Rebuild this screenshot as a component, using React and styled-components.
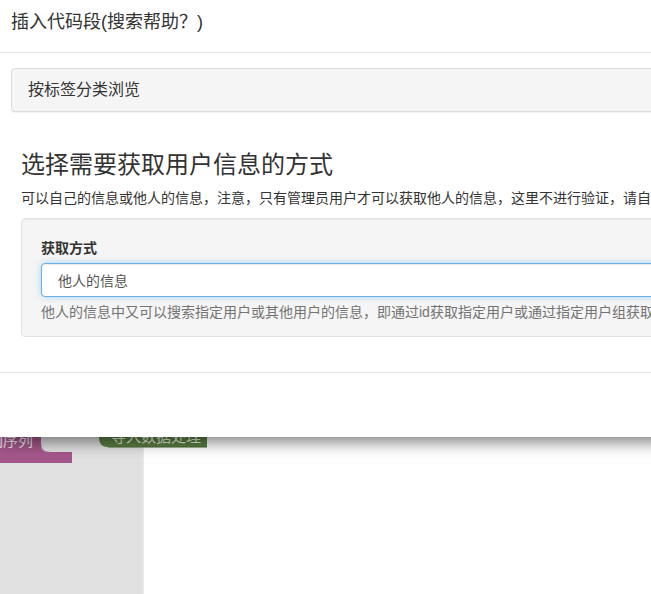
import styled, { createGlobalStyle } from 'styled-components';

const GlobalStyle = createGlobalStyle`
  html, body {
    margin: 0;
    padding: 0;
    overflow: hidden;
  }
  body {
    font-family: "Liberation Sans", "Noto Sans CJK SC", sans-serif;
    font-size: 14px;
    color: #333;
  }
`;

const Page = styled.div`
  position: relative;
  width: 651px;
  height: 594px;
  overflow: hidden;
  display: flex;
  background: #fff;
`;

const Toolbox = styled.div`
  width: 143px;
  flex-shrink: 0;
  background: #e1e1e1;
  border-right: 1px solid #ececec;
`;

const Workspace = styled.div`
  flex: 1;
  background: #fff;
`;

const Block = styled.svg`
  position: absolute;
  overflow: visible;
`;

const BlockText = styled.text`
  font-family: "Liberation Sans", "Noto Sans CJK SC", sans-serif;
  font-size: 15px;
  fill: ${({ $light }) => $light || '#f0e6ee'};
`;

const Modal = styled.div`
  position: absolute;
  top: 0;
  left: 0;
  width: 920px;
  background: #fff;
  box-shadow: 0 5px 15px rgba(0, 0, 0, 0.5);
  z-index: 2;
`;

const Header = styled.div`
  padding: 9px 11px 17px;
  border-bottom: 1px solid #e5e5e5;
`;

const Title = styled.h4`
  margin: 0;
  font-size: 18px;
  font-weight: 400;
  line-height: 26px;
  color: #333;
`;

const Body = styled.div`
  padding: 15px 11px;
  display: flow-root;
`;

const Panel = styled.div`
  border: 1px solid #ddd;
  border-radius: 4px;
  background: #f5f5f5;
  padding: 10px 16px;
  margin-bottom: 20px;
  box-shadow: 0 1px 1px rgba(0, 0, 0, 0.05);
`;

const PanelTitle = styled.div`
  font-size: 16px;
  line-height: 22px;
  color: #333;
`;

const Section = styled.div`
  display: flow-root;
  padding: 0 10px;
`;

const Heading = styled.h3`
  margin: 20px 0 10px;
  font-size: 24px;
  font-weight: 400;
  line-height: 26px;
  color: #333;
`;

const Intro = styled.p`
  margin: 0 0 10px;
  line-height: 20px;
  white-space: nowrap;
`;

const Well = styled.div`
  border: 1px solid #e3e3e3;
  border-radius: 4px;
  background: #f5f5f5;
  padding: 19px 19px 14px;
  margin-bottom: 20px;
  box-shadow: inset 0 1px 1px rgba(0, 0, 0, 0.05);
`;

const Label = styled.label`
  display: block;
  font-weight: 700;
  line-height: 20px;
  margin-bottom: 5px;
`;

const Select = styled.div`
  height: 34px;
  box-sizing: border-box;
  border: 1px solid #66afe9;
  border-radius: 4px;
  background: #fff;
  padding: 0 16px;
  display: flex;
  align-items: center;
  color: #555;
  box-shadow: inset 0 1px 1px rgba(0, 0, 0, 0.075), 0 0 6px rgba(102, 175, 233, 0.5);
`;

const Help = styled.div`
  margin-top: 5px;
  line-height: 20px;
  color: #737373;
  white-space: nowrap;
`;

const Footer = styled.div`
  height: 64px;
  border-top: 1px solid #e5e5e5;
`;

export default function App() {
  return (
    <>
      <GlobalStyle />
      <Page>
        <Toolbox />
        <Workspace />
        <Block style={{ left: 0, top: 400 }} width="80" height="70">
          <path d="M-20 0 H41 V44 Q41 52 49 52 H72 V63 H-20 Z" fill="#a5578b" />
          <path d="M41 44 Q41 52 49 52" stroke="#c58bae" fill="none" />
          <BlockText x="-12" y="46">列序列</BlockText>
        </Block>
        <Block style={{ left: 99, top: 400 }} width="110" height="50">
          <path d="M0 0 H108 V47 H9 Q0 47 0 38 Z" fill="#5b8042" />
          <path d="M9 47 H108" stroke="#4a6a35" />
          <BlockText x="12" y="42" $light="#e6eedf">导入数据处理</BlockText>
        </Block>
        <Modal>
          <Header>
            <Title>插入代码段(搜索帮助？)</Title>
          </Header>
          <Body>
            <Panel>
              <PanelTitle>按标签分类浏览</PanelTitle>
            </Panel>
            <Section>
              <Heading>选择需要获取用户信息的方式</Heading>
              <Intro>可以自己的信息或他人的信息，注意，只有管理员用户才可以获取他人的信息，这里不进行验证，请自行确认权限。</Intro>
              <Well>
                <Label>获取方式</Label>
                <Select>他人的信息</Select>
                <Help>他人的信息中又可以搜索指定用户或其他用户的信息，即通过id获取指定用户或通过指定用户组获取多个用户。</Help>
              </Well>
            </Section>
          </Body>
          <Footer />
        </Modal>
      </Page>
    </>
  );
}
